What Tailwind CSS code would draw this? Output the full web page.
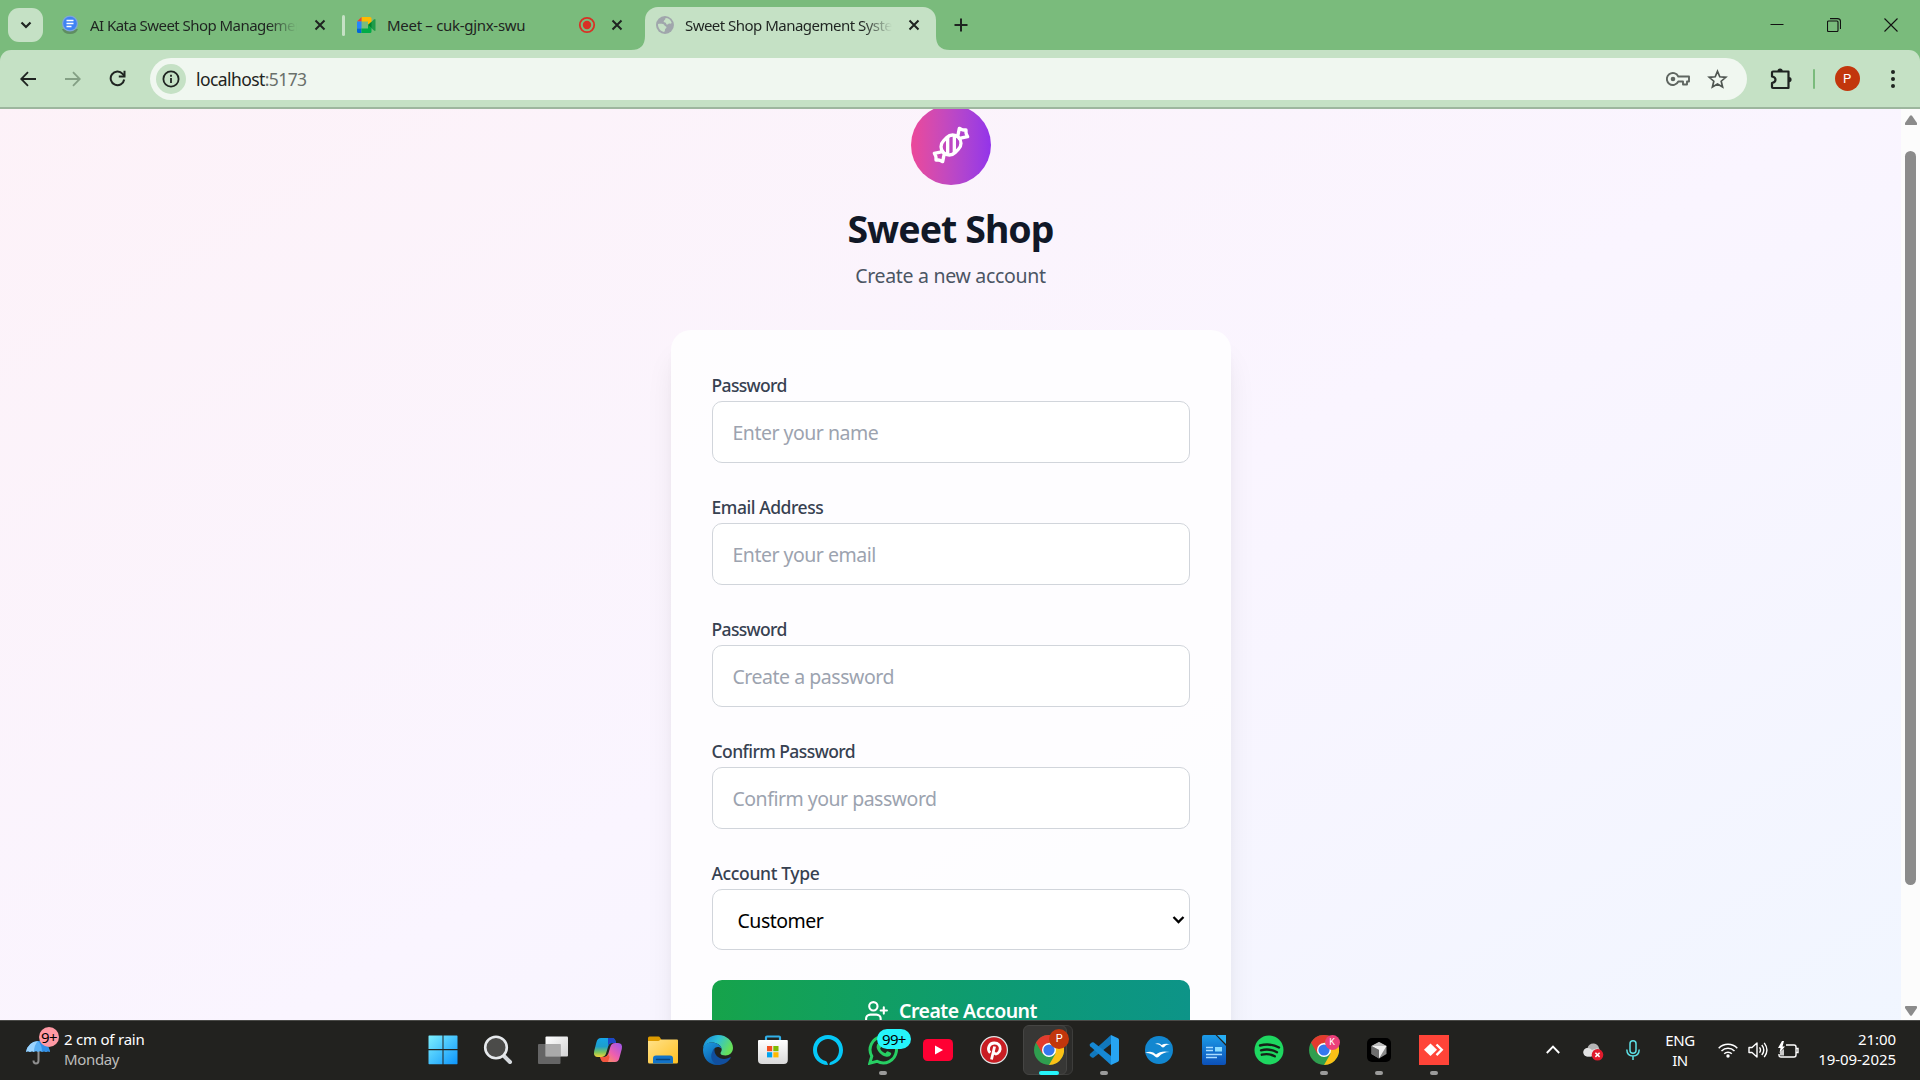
<!DOCTYPE html>
<html lang="en">
<head>
<meta charset="utf-8">
<title>Sweet Shop Management System</title>
<script src="https://cdn.jsdelivr.net/npm/@tailwindcss/browser@4"></script>
</head>
<body class="w-[1920px] h-[1080px] overflow-hidden flex flex-col font-['Noto_Sans','Open_Sans',sans-serif] bg-[#7abb7c] text-[#1f2421]">

<!-- Tab strip -->
<header class="h-[50px] shrink-0 flex items-center pl-2 text-[15px] whitespace-nowrap">
  <div class="w-[35px] h-[34px] rounded-[11px] bg-[#c5e1c5] grid place-items-center">
    <svg width="14" height="14" viewBox="0 0 14 14" fill="none" stroke="#1f2421" stroke-width="2.2"><path d="M2.5 4.5 7 9l4.500-4.500"/></svg>
  </div>
  <svg class="ml-[18px]" width="18" height="20" viewBox="0 0 18 20"><path d="M1 14h16q-1.500 5-8 5t-8-5z" fill="#5f8d62"/><circle cx="9" cy="8.500" r="8" fill="#7fa6d6"/><circle cx="9" cy="8.500" r="6.800" fill="#3f82f4"/><path d="M5.500 5.500h7M5.500 8.500h7M5.500 11.500h5" stroke="#fff" stroke-width="1.500"/></svg>
  <span class="ml-[11px] w-[207px] overflow-hidden tracking-[-0.550px] [mask-image:linear-gradient(to_right,black_86%,transparent)]">AI Kata Sweet Shop Management</span>
  <div class="w-[45px] grid place-items-center"><svg width="12" height="12" viewBox="0 0 12 12" stroke="#1f2421" stroke-width="2"><path d="m1.500 1.500 9 9m0-9-9 9"/></svg></div>
  <div class="w-[3px] h-[21px] rounded bg-[#c5e1c5]"></div>
  <svg class="ml-[12px]" width="19" height="16" viewBox="0 0 19 16"><path d="M4.500 0H13q1.500 0 1.500 1.500V5L11 8V4.500H4.500z" fill="#ffba00"/><path d="M0 4.500 4.500 0v4.500z" fill="#ea4335"/><path d="M0 4.500h4.500v7H0z" fill="#2684fc"/><path d="M0 11.500h4.500V16H1.500Q0 16 0 14.500z" fill="#0066da"/><path d="M4.500 11.500H11V8l3.500 3v3.500q0 1.500-1.500 1.500H4.500z" fill="#00ac47"/><path d="m11 8 6-5.500q1.500-1 1.500.5v10q0 1.500-1.500.5z" fill="#1f9b48"/><path d="m11 8 3.500-3v6z" fill="#00832d"/></svg>
  <span class="ml-[11px] w-[185px] tracking-[-0.300px]">Meet – cuk-gjnx-swu</span>
  <div class="w-[30px] grid place-items-center"><svg width="18" height="18" viewBox="0 0 18 18"><circle cx="9" cy="9" r="7.200" fill="none" stroke="#d93025" stroke-width="1.800"/><circle cx="9" cy="9" r="4.200" fill="#d93025"/></svg></div>
  <div class="w-[30px] grid place-items-center"><svg width="12" height="12" viewBox="0 0 12 12" stroke="#1f2421" stroke-width="2"><path d="m1.500 1.500 9 9m0-9-9 9"/></svg></div>
  <div class="relative self-end ml-[13px] w-[291px] h-[43px] rounded-t-[13px] bg-[#c5e1c5] flex items-center pb-[7px]">
    <svg class="absolute -left-[14px] bottom-0" width="14" height="14"><path d="M14 0v14H0Q14 14 14 0" fill="#c5e1c5"/></svg>
    <svg class="absolute -right-[14px] bottom-0" width="14" height="14"><path d="M0 0v14h14Q0 14 0 0" fill="#c5e1c5"/></svg>
    <svg class="ml-[11px]" width="18" height="18" viewBox="0 0 18 18"><circle cx="9" cy="9" r="9" fill="#a0a6ac"/><path d="M9.500 2c3 0 5.500 2 6.300 5-1.500 1.300-2.300 0-3.500 1s-2 .6-2.300-1C9 6 7.500 6.800 7.700 5.300 8 4 10 3.500 9.500 2zM2 8c2-.3 5.800-.5 6.500 1.300.4 1.400 1.800.4 2 2 .2 1.200-1.700 1.200-1.500 2.700.1 1-.6 1.700-1 1.900C4.500 15.300 1.800 12 2 8z" fill="#c5e1c5"/></svg>
    <span class="ml-[11px] w-[208px] overflow-hidden tracking-[-0.520px] [mask-image:linear-gradient(to_right,black_86%,transparent)]">Sweet Shop Management System</span>
    <div class="w-[44px] grid place-items-center"><svg width="12" height="12" viewBox="0 0 12 12" stroke="#1f2421" stroke-width="2"><path d="m1.500 1.500 9 9m0-9-9 9"/></svg></div>
  </div>
  <div class="w-[50px] grid place-items-center"><svg width="14" height="14" viewBox="0 0 14 14" stroke="#1f2421" stroke-width="2"><path d="M7 .5v13M.5 7h13"/></svg></div>
  <div class="flex ml-auto pr-px">
    <div class="w-[57px] grid place-items-center"><svg width="14" height="14" viewBox="0 0 14 14" stroke="#111"><path d="M.5 6.500h13"/></svg></div>
    <div class="w-[57px] grid place-items-center"><svg width="14" height="14" viewBox="0 0 14 14" fill="none" stroke="#111" stroke-width="1.100"><rect x=".5" y="3" width="10.500" height="10.500" rx="1"/><path d="M3 .6h7.500q3 0 3 3V11"/></svg></div>
    <div class="w-[57px] grid place-items-center"><svg width="14" height="14" viewBox="0 0 14 14" stroke="#111" stroke-width="1.100"><path d="m.5.500 13 13m0-13-13 13"/></svg></div>
  </div>
</header>

<!-- Toolbar -->
<nav class="h-[59px] shrink-0 flex items-center bg-[#c5e1c5] rounded-t-[11px] border-b-2 border-[#9db69e] pl-[5px]">
  <div class="w-[45px] grid place-items-center"><svg width="16" height="16" viewBox="0 0 16 16" fill="none" stroke="#1f2421" stroke-width="1.800"><path d="M16 8H1.500M8 1.200 1.200 8 8 14.800"/></svg></div>
  <div class="w-[45px] grid place-items-center"><svg width="16" height="16" viewBox="0 0 16 16" fill="none" stroke="#84a085" stroke-width="1.800"><path d="M0 8h14.500M8 1.200 14.800 8 8 14.800"/></svg></div>
  <div class="w-[45px] grid place-items-center"><svg width="17" height="17" viewBox="0 0 17 17" fill="none" stroke="#1f2421" stroke-width="2"><path d="M15.200 9.500a6.800 6.800 0 1 1-1.600-5.600L15.500 6"/><path d="M15.500.8V6.500H9.800"/></svg></div>
  <div class="ml-[10px] w-[1597px] h-[42px] rounded-full bg-[#f0f7f0] flex items-center pl-[6px]">
    <div class="size-[30px] rounded-full bg-[#c5e1c5] grid place-items-center"><svg width="18" height="18" viewBox="0 0 18 18" fill="none" stroke="#1f2421" stroke-width="1.800"><circle cx="9" cy="9" r="7.600"/><path d="M9 8v5M9 4.800v1.900"/></svg></div>
    <div class="ml-[10px] pt-px text-[17.500px] tracking-[-0.580px]">localhost<span class="text-[#6a706b]">:5173</span></div>
    <svg class="ml-auto" width="24" height="14" viewBox="0 0 24 14" fill="none" stroke="#5f6661" stroke-width="1.900"><path d="M12.300 4.500H23v5h-2v3h-4v-3h-4.700A6 6 0 1 1 12.300 4.500z" stroke-linejoin="round"/><circle cx="7" cy="7" r="2.300" fill="#5f6661" stroke="none"/></svg>
    <svg class="ml-[17px] mr-[19px]" width="21" height="20" viewBox="0 0 21 20" fill="none" stroke="#4f5651" stroke-width="1.700"><path d="m10.500 2.300 2.300 5.500 6 .5-4.600 3.900 1.400 5.800-5.100-3.100L5.400 18l1.400-5.800-4.600-3.900 6-.5z"/></svg>
  </div>
  <div class="w-[66px] pl-[2px] grid place-items-center"><svg width="22" height="22" viewBox="0 0 22 22" fill="none" stroke="#1f2421" stroke-width="2.200"><path d="M3 3.500h15.500v16.500H3q-1 0-1-1v-4q3.500-.6 3.500-3.200T2 8.500v-4q0-1 1-1z" stroke-linejoin="round"/><path d="M7.500 3a2.600 2.600 0 0 1 5.200 0zM19 9a2.600 2.600 0 0 1 0 5.200z" fill="#1f2421" stroke="none"/></svg></div>
  <div class="w-[2px] h-5 rounded bg-[#7abb7c]"></div>
  <div class="w-[64px] grid place-items-center"><div class="size-[25px] rounded-full bg-[#c2360c] text-white text-[13px] grid place-items-center font-['Roboto',sans-serif]">P</div></div>
  <div class="w-[27px] grid place-items-center"><svg width="4" height="18" fill="#1f2421"><circle cx="2" cy="2" r="2"/><circle cx="2" cy="9" r="2"/><circle cx="2" cy="16" r="2"/></svg></div>
</nav>

<!-- Viewport -->
<div class="h-[911px] shrink-0 flex bg-[#fcfcfc]">
  <main class="w-[1901px] h-full overflow-hidden">
    <div class="-mt-[24px] h-[1100px] pt-[20px] bg-linear-to-br from-[#fdf2f8] via-[#faf5ff] to-[#eff6ff] flex flex-col items-center">
      <div class="size-20 shrink-0 rounded-full bg-linear-to-r from-[#ec4899] to-[#9333ea] grid place-items-center">
        <svg width="40" height="40" viewBox="0 0 24 24" fill="none" stroke="#fff" stroke-width="2" stroke-linecap="round" stroke-linejoin="round"><path d="m9.500 7.500-2 2a4.950 4.950 0 1 0 7 7l2-2a4.950 4.950 0 1 0-7-7Z"/><path d="M14 6.500v10"/><path d="M10 7.500v10"/><path d="m16 7 1-5 1.370.680A3 3 0 0 0 19.700 3H21v1.300c0 .460.100.920.320 1.330L22 7l-5 1"/><path d="m8 17-1 5-1.370-.680A3 3 0 0 0 4.300 21H3v-1.300a3 3 0 0 0-.320-1.330L2 17l5-1"/></svg>
      </div>
      <h1 class="mt-[21px] h-[45px] leading-[45px] text-[37.500px] font-bold text-[#111827] tracking-[-0.950px]">Sweet Shop</h1>
      <p class="mt-[10px] h-[30px] leading-[30px] text-[19.500px] text-[#4b5563] tracking-[-0.300px]">Create a new account</p>
      <form class="mt-[39px] w-[560px] h-[760px] shrink-0 rounded-[20px] bg-white/80 shadow-[0_25px_31px_-6px_rgba(0,0,0,0.1),0_10px_12px_-7px_rgba(0,0,0,0.1)] px-[41px] pt-[41px] flex flex-col gap-[30px]">
        <div class="flex flex-col h-[92px]"><label class="h-[30px] leading-[28px] text-[17.500px] font-medium text-[#374151] tracking-[-0.650px]">Password</label>
          <div class="h-[62px] rounded-[10px] border border-[#d1d5db] bg-white px-5 pt-[2px] flex items-center text-[19.500px] tracking-[-0.500px] text-[#9ca3af]">Enter your name</div></div>
        <div class="flex flex-col h-[92px]"><label class="h-[30px] leading-[28px] text-[17.500px] font-medium text-[#374151] tracking-[-0.450px]">Email Address</label>
          <div class="h-[62px] rounded-[10px] border border-[#d1d5db] bg-white px-5 pt-[2px] flex items-center text-[19.500px] tracking-[-0.500px] text-[#9ca3af]">Enter your email</div></div>
        <div class="flex flex-col h-[92px]"><label class="h-[30px] leading-[28px] text-[17.500px] font-medium text-[#374151] tracking-[-0.650px]">Password</label>
          <div class="h-[62px] rounded-[10px] border border-[#d1d5db] bg-white px-5 pt-[2px] flex items-center text-[19.500px] tracking-[-0.470px] text-[#9ca3af]">Create a password</div></div>
        <div class="flex flex-col h-[92px]"><label class="h-[30px] leading-[28px] text-[17.500px] font-medium text-[#374151] tracking-[-0.570px]">Confirm Password</label>
          <div class="h-[62px] rounded-[10px] border border-[#d1d5db] bg-white px-5 pt-[2px] flex items-center text-[19.500px] tracking-[-0.500px] text-[#9ca3af]">Confirm your password</div></div>
        <div class="flex flex-col h-[91px]"><label class="h-[30px] leading-[28px] text-[17.500px] font-medium text-[#374151] tracking-[-0.350px]">Account Type</label>
          <div class="h-[61px] rounded-[10px] border border-[#d1d5db] bg-white pl-[25px] pr-[4px] flex items-center justify-between text-[19.500px] tracking-[-0.500px] text-black"><span class="pt-[3px]">Customer</span><svg width="13" height="10" viewBox="0 0 13 10" fill="none" stroke="#000" stroke-width="2.300"><path d="m1.500 2 5 5 5-5"/></svg></div></div>
        <div class="h-[62px] rounded-[10px] bg-linear-to-r from-[#16a34a] to-[#0d9488] flex items-center justify-center gap-[10px] text-white text-[19.500px] tracking-[-0.530px] font-semibold">
          <svg width="25" height="25" viewBox="0 0 24 24" fill="none" stroke="currentColor" stroke-width="2" stroke-linecap="round" stroke-linejoin="round"><path d="M16 21v-2a4 4 0 0 0-4-4H6a4 4 0 0 0-4 4v2"/><circle cx="9" cy="7" r="4"/><path d="M19 8v6M22 11h-6"/></svg>
          <span>Create Account</span>
        </div>
      </form>
    </div>
  </main>
  <div class="w-[19px] h-full flex flex-col items-center pt-[6px] pb-[4px]">
    <svg width="12" height="10" fill="#8b8b8b"><path d="M5 .7q1-1 2 0l5 7.300q.5 2-1 2H1q-1.500 0-1-2z"/></svg>
    <div class="mt-[26px] w-[11px] h-[734px] rounded-full bg-[#8b8b8b]"></div>
    <svg class="mt-auto" width="12" height="10" fill="#8b8b8b"><path d="M5 9.300q1 1 2 0L12 2q.5-2-1-2H1Q-.5 0 0 2z"/></svg>
  </div>
</div>

<!-- Taskbar -->
<footer class="h-[60px] shrink-0 flex bg-[#22221f] border-t border-[#4a4a47] text-white text-[15px] leading-5">
  <div class="w-[415px] flex pl-[26px] pt-[7px]">
    <div class="relative w-[38px] h-[38px]">
      <svg class="absolute left-0 top-[12px]" width="24" height="26" viewBox="0 0 24 26"><path d="M12.500 2v18.500q0 3-2.500 3t-2.500-3" fill="none" stroke="#8f8f8f" stroke-width="2"/><path d="M0 12Q2 2 12 1q10 1 12 11-2-1.500-4 0-2-1.500-4 0-2-1.500-4 0-2-1.500-4 0-2-1.500-4 0-2-1.500-4 0z" fill="#5ab0f5"/><path d="M12 1q-4 4-4 11-2-1.500-4 0-2-1.500-4 0Q2 2 12 1z" fill="#9ad4ff"/><path d="M12 1q4 4 4 11 2-1.500 4 0 2-1.500 4 0Q22 2 12 1z" fill="#2f8fe8"/></svg>
      <div class="absolute left-[13px] -top-px size-5 rounded-full bg-[#ff99a4] text-black text-[15px] grid place-items-center tracking-[-0.500px]">9+</div>
    </div>
    <div class="pt-px"><div class="tracking-[-0.220px]">2 cm of rain</div><div class="text-[#bdbdbb] tracking-[-0.350px]">Monday</div></div>
  </div>

  <div class="w-[1047px] h-[58px] grid grid-cols-19 place-items-center">
    <svg width="30" height="30" viewBox="0 0 30 30"><defs><linearGradient id="win" x1="0" y1="0" x2="1" y2="1"><stop stop-color="#7df0ff"/><stop offset="1" stop-color="#0d95fb"/></linearGradient></defs><path d="M1 .5h13.500V14H.5V1zM15.500.5H29L29.500 1v13h-14zM.5 15.200h14v14H1l-.5-.5zM15.500 15.200h14v13.500l-.5.500H15.500z" fill="url(#win)"/></svg>
    <svg width="30" height="30" viewBox="0 0 30 30"><path d="m20 20 7 7" stroke="#d5d9dd" stroke-width="4" stroke-linecap="round"/><circle cx="13" cy="12.500" r="10.800" fill="#4b4b49" stroke="#e6e9ec" stroke-width="2.600"/></svg>
    <svg width="32" height="30" viewBox="0 0 32 30"><defs><linearGradient id="tv" x1="0" y1="0" x2="1" y2="1"><stop stop-color="#fff"/><stop offset="1" stop-color="#d2d2d2"/></linearGradient></defs><rect x="8.500" y="1.500" width="22.500" height="20" rx="1" fill="url(#tv)"/><rect x="1" y="9" width="22.500" height="20" rx="1" fill="#777" fill-opacity=".8"/><path d="M8.500 9h15v12.500h-15z" fill="#aaa"/></svg>
    <svg width="30" height="30" viewBox="0 0 30 30"><defs><linearGradient id="ca" x1="0" y1="0" x2="0" y2="1"><stop stop-color="#15a5e8"/><stop offset=".45" stop-color="#1d9ecb"/><stop offset=".75" stop-color="#7cc45c"/><stop offset="1" stop-color="#f5d33a"/></linearGradient><linearGradient id="cb" x1="1" y1="0" x2="0" y2="1"><stop stop-color="#9a55ee"/><stop offset=".5" stop-color="#ee5fae"/><stop offset="1" stop-color="#ffa73e"/></linearGradient></defs><path d="M8 3h11q3 0 4 5h-4q-3 0-4 4l-1.800 6q-1 4-5 4H5q-5 0-3.800-6l2.300-9Q4.500 3 8 3z" fill="url(#ca)"/><path d="M15 3h4.500q3 0 3.500 5h-4q-3 0-4 3z" fill="#1d47c8"/><path d="M22 27H11.500q-3 0-4-5H11q3.500 0 4.500-4l1.800-6q1-4 5-4H25q5 0 3.800 6l-2.300 8.500Q25.500 27 22 27z" fill="url(#cb)"/><path d="M15 27h-4q-3 0-4-5h4q3 0 4-3l1.500 3z" fill="#f3553f"/></svg>
    <svg width="30" height="30" viewBox="0 0 30 30"><defs><linearGradient id="fe" x1="0" y1="0" x2="1" y2="1"><stop stop-color="#ffe28a"/><stop offset="1" stop-color="#ffc022"/></linearGradient></defs><path d="M0 8V3q0-1.500 1.500-1.500h9q1 0 1.500 1L13.500 5H20v6H0z" fill="#dd9b00"/><path d="M0 6h10.500L13 4.500h16q1 0 1 1V27q0 1.500-1.500 1.500h-27Q0 28.500 0 27z" fill="url(#fe)"/><path d="M5 28.500v-5q0-3 3-3h14q3 0 3 3v5z" fill="#1273c8"/><path d="M8.500 24.500h13" stroke="#07437c" stroke-width="1.500" stroke-linecap="round"/></svg>
    <svg width="30" height="30" viewBox="0 0 30 30"><defs><linearGradient id="ea" x1="0" y1="0" x2="1" y2=".4"><stop stop-color="#1583d8"/><stop offset=".5" stop-color="#2fc0d8"/><stop offset="1" stop-color="#66e05a"/></linearGradient><linearGradient id="eb" x1="0" y1="0" x2=".6" y2="1"><stop stop-color="#1b9de2"/><stop offset="1" stop-color="#0c56a6"/></linearGradient></defs><path d="M0 13C1 5 7.500 0 15 0c9 0 15 6.500 15 13 0 4.500-3.500 7.500-7.500 7.500-3 0-5-1-5-2.300 0-.9 1.200-1.600 1.200-3.700C18.700 10 13 7.500 9 7.500 5 7.500 2 9.500 0 13z" fill="url(#ea)"/><path d="M0 15c0-4.500 4-7.500 8.500-7.500 5 0 9.500 2.500 10.200 6.500-1-1.500-2.500-2-4-2-3 0-4.500 3-4.500 5.500 0 6 5 9.500 10 9.500q-3 3-6 3C6 30 0 23.500 0 15z" fill="url(#eb)"/><path d="M11.500 13C10.500 20 16 24 21 24c3 0 5-1.200 6-1.700.5-.2 1 .2.700.7C25 27.500 20 30 15 30 10 28.500 6.500 23 9 17.500q.8-3 2.500-4.500z" fill="#114f9e"/></svg>
    <svg width="30" height="30" viewBox="0 0 30 30"><defs><linearGradient id="ms" x1="0" y1="0" x2="0" y2="1"><stop stop-color="#fff"/><stop offset="1" stop-color="#d9d9d9"/></linearGradient></defs><path d="M8 6V2.500Q8 1.500 9 1.500h12q1 0 1 1V6" fill="none" stroke="#31b0e8" stroke-width="2.200"/><path d="M1 5h28q.8 0 .8 1v19q0 4-4 4H4q-4 0-4-4V6q0-1 1-1z" fill="url(#ms)"/><path fill="#f25022" d="M9 11h5.200v5.200H9z"/><path fill="#7fba00" d="M15.300 11h5.200v5.200h-5.200z"/><path fill="#00a4ef" d="M9 17.200h5.200v5.200H9z"/><path fill="#ffb900" d="M15.300 17.200h5.200v5.200h-5.200z"/></svg>
    <svg width="30" height="30" viewBox="0 0 30 30"><path d="M15 30C6 30 0 23 0 15 0 6.500 6.500 0 15 0s15 6.500 15 15c0 7.500-5 13.500-12.500 15-1 0-1.500-.5-1-1.500l1-1.500c5-1.500 8.500-6 8.500-12 0-6-5-11-11-11S4 9 4 15c0 5 3.500 9.500 8 10.800 2 .5 2.500 2 3 4.200z" fill="#05c8f7"/></svg>
    <div class="relative grid place-items-center w-full h-full"><svg width="30" height="30" viewBox="0 0 30 30" fill="none"><path d="m1.800 28.200 2-7A13.200 13.200 0 1 1 9 26.300z" stroke="#27cf63" stroke-width="3"/><path d="M10.500 8q1-.5 1.600.4l1.200 2.800q.2.800-1.200 2.200c1 2.500 3 4 5.300 4.800l1.500-1.700q.5-.5 1.200-.1l2.700 1.300q.7.500.2 1.800-1.200 2.700-4.600 2.300c-5-1-9.500-6-9.800-9.800q0-2.800 1.900-4z" fill="#27cf63"/></svg>
      <div class="absolute left-[21px] top-[8px] w-[34px] h-5 rounded-full bg-[#25f5fb] text-black text-[15px] leading-5 text-center tracking-[-0.700px]">99+</div><div class="absolute bottom-[4px] w-2 h-1 rounded-full bg-[#9b9b9a]"></div></div>
    <svg width="30" height="22" viewBox="0 0 30 22"><rect width="30" height="22" rx="4.500" fill="#ff0033"/><path d="m12 6.500 8 4.500-8 4.500z" fill="#fff"/></svg>
    <svg width="28" height="28" viewBox="0 0 28 28"><circle cx="14" cy="14" r="13.400" fill="#c91d23" stroke="#dde6e6" stroke-width="1.200"/><path d="M10.200 16.800C6.600 13 9 7 14.300 7c4 0 6.300 2.600 5.900 6-.4 4-4.200 6.500-6.500 3.700M14.600 10.500 11.500 23.500" fill="none" stroke="#fff" stroke-width="2.800"/></svg>
    <div class="relative grid place-items-center w-full h-full"><div class="absolute left-[5px] top-[4px] w-[47px] h-[50px] rounded-[6px] bg-[#2c2c2a] border border-[#3d3d3b]"></div><div class="absolute left-[2px] top-[4px] w-[44px] h-[50px] rounded-[6px] bg-[#373735] border border-[#454543]"></div>
      <svg class="relative" width="30" height="30" viewBox="0 0 30 30"><circle cx="15" cy="15" r="15" fill="#2f9e4f"/><path d="M2 7.500A15 15 0 0 1 28 7.500H15L8.500 18.700z" fill="#e33b2e"/><path d="M28 7.500A15 15 0 0 1 15 30l6.500-11.200L15 7.500z" fill="#fbc116"/><circle cx="15" cy="15" r="7" fill="#fff"/><circle cx="15" cy="15" r="5.600" fill="#3577ee"/></svg>
      <div class="absolute left-[28px] top-[8px] size-5 rounded-full bg-[#c2360c] text-[11px] grid place-items-center font-['Roboto',sans-serif]">P</div><div class="absolute bottom-[4px] w-5 h-1 rounded-full bg-[#25f5fb]"></div></div>
    <div class="relative grid place-items-center w-full h-full"><svg width="30" height="30" viewBox="0 0 30 30"><path d="M22 0 1.200 18.700Q0 20 1 21l1.800 1.500q1 .6 2 0L22 9z" fill="#1178bd"/><path d="M22 30 1.200 11.300Q0 10 1 9l1.800-1.500q1-.6 2 0L22 21z" fill="#1688d4"/><path d="m22 0 7 3.200q1 .6 1 1.800v20q0 1.200-1 1.800L22 30z" fill="#27a4f2"/></svg><div class="absolute bottom-[4px] w-2 h-1 rounded-full bg-[#9b9b9a]"></div></div>
    <svg width="28" height="28" viewBox="0 0 28 28"><circle cx="14" cy="14" r="14" fill="#1287d0"/><path d="M10 8q4-2 6.500 1 3.500-2 8.500-.8-4 0-5.500 2.600-1.500 1.500-3 0-2-3-6.500-2.800zM0 17q7-3 11 1.500 5-4.500 14-2.500-7-.2-11 4.500-2 2-4 0-4-4-10-3.500z" fill="#fff"/></svg>
    <svg width="24" height="30" viewBox="0 0 24 30"><defs><linearGradient id="lo" x1="0" y1="0" x2="0" y2="1"><stop stop-color="#1c9ce8"/><stop offset="1" stop-color="#0c50b8"/></linearGradient></defs><path d="M2 0h11.500L24 11v17q0 2-2 2H2q-2 0-2-2V2Q0 0 2 0z" fill="url(#lo)"/><path d="M15 0h9v9z" fill="#27aef4"/><path d="M4 12.500h7M4 15.500h7M4 19.500h16M4 22.500h11" stroke="#a9dcff" stroke-width="1.500"/><path d="M13 12h7v4.500h-7z" fill="#8bdcff"/></svg>
    <svg width="30" height="30" viewBox="0 0 30 30"><circle cx="15" cy="15" r="14.500" fill="#1ed760"/><path d="M6 10.500q10-2.800 19 2M7 15.300q8.500-2.300 16 1.900M7.800 19.700q7-1.700 13 1.600" fill="none" stroke="#152018" stroke-width="2.400" stroke-linecap="round"/></svg>
    <div class="relative grid place-items-center w-full h-full"><svg width="30" height="30" viewBox="0 0 30 30"><circle cx="15" cy="15" r="15" fill="#2f9e4f"/><path d="M2 7.500A15 15 0 0 1 28 7.500H15L8.500 18.700z" fill="#e33b2e"/><path d="M28 7.500A15 15 0 0 1 15 30l6.500-11.200L15 7.500z" fill="#fbc116"/><circle cx="15" cy="15" r="7" fill="#fff"/><circle cx="15" cy="15" r="5.600" fill="#3577ee"/></svg><div class="absolute left-[28px] top-[14px] size-[15px] rounded-full bg-[#ec407a] text-[9px] leading-none grid place-items-center font-['Roboto',sans-serif]">K</div><div class="absolute bottom-[4px] w-2 h-1 rounded-full bg-[#9b9b9a]"></div></div>
    <div class="relative grid place-items-center w-full h-full"><svg width="24" height="24" viewBox="0 0 24 24"><rect width="24" height="24" rx="5" fill="#000"/><path d="m12 4 7.500 4v8L12 20.500 4.500 16V8z" fill="#8b8b8b"/><path d="M4.500 8h15L12 20.500V12z" fill="#efefef"/><path d="M4.500 8 12 4l7.500 4z" fill="#bcbcbc"/><path d="m4.500 8 7.500 4v8.500L4.500 16z" fill="#6c6c6c"/></svg><div class="absolute bottom-[4px] w-2 h-1 rounded-full bg-[#9b9b9a]"></div></div>
    <div class="relative grid place-items-center w-full h-full"><svg width="30" height="30" viewBox="0 0 30 30"><path d="M0 0h30v30H0z" fill="#ff4438"/><path d="m11.500 8.500 6.500 6.300-6.500 6.300L5 14.800z" fill="#fff"/><path d="m17.500 9.500 5.300 5.300-5.300 5.300" stroke="#fff" stroke-width="2.300" fill="none"/></svg><div class="absolute bottom-[4px] w-2 h-1 rounded-full bg-[#9b9b9a]"></div></div>
  </div>

  <div class="flex-1 h-[57px] flex items-center pl-[84px] pr-[24px]">
    <svg width="14" height="9" viewBox="0 0 14 9" fill="none" stroke="#fff" stroke-width="1.900"><path d="m.8 8 6.200-6.300L13.200 8"/></svg>
    <svg class="ml-[23px] mt-[4px]" width="21" height="18" viewBox="0 0 21 18"><path d="M4.500 13.500a4.300 4.300 0 0 1 0-8.500Q6 0 11 .5q4 .5 5 4.500l2 5-9 3.500z" fill="#b4b4b4"/><path d="M4 13.500A4.200 4.200 0 0 1 5 5q2 0 4 2l6-2-7 8.500z" fill="#e3e3e3"/><circle cx="14.500" cy="11.800" r="5.800" fill="#e01b2c"/><path d="m12.400 9.700 4.200 4.200m0-4.200-4.200 4.200" stroke="#fff" stroke-width="1.500"/></svg>
    <svg class="ml-[22px]" width="14" height="20" viewBox="0 0 14 20" fill="none" stroke="#5de0e6" stroke-width="1.500"><rect x="4" y=".8" width="6" height="12.500" rx="3"/><path d="M.8 9.500Q1 16 7 16t6.200-6.500M7 16v4"/></svg>
    <div class="ml-[25px] w-[30px] text-center tracking-[-0.400px]">ENG<br>IN</div>
    <svg class="ml-[23px]" width="20" height="16" viewBox="0 0 20 16" fill="none" stroke="#fff" stroke-width="1.500"><path d="M.7 6.200a13 13 0 0 1 18.600 0M3.500 9a9.200 9.200 0 0 1 13 0M6.200 11.700a5.400 5.400 0 0 1 7.600 0"/><circle cx="10" cy="14" r="1.700" fill="#fff" stroke="none"/></svg>
    <svg class="ml-[10px]" width="20" height="18" viewBox="0 0 20 18" fill="none" stroke="#fff" stroke-width="1.400"><path d="M1 6.500h3L9 2v14l-5-4.500H1z" stroke-linejoin="round"/><path d="M11.500 6.300q2 2.700 0 5.400M13.800 4q4 5 0 10M16.200 1.800q5.500 7.200 0 14.400"/></svg>
    <svg class="ml-[10px]" width="21" height="18" viewBox="0 0 21 18" fill="none" stroke="#fff" stroke-width="1.400"><path d="M8 4h8q2 0 2 2v8q0 2-2 2H3q-2 0-2-2v-1M18.500 7.500h1.500v4h-1.500" /><path d="M4 0 0 7h2.500l-1 5L7 5.500H4.500L6 0z" fill="#fff" stroke="none"/><path d="M2 14.500V11l4-3v6.500z" fill="#ccc" stroke="none"/></svg>
    <div class="ml-auto text-right tracking-[-0.050px] -mt-[2px]">21:00<br>19-09-2025</div>
  </div>
</footer>
</body>
</html>
